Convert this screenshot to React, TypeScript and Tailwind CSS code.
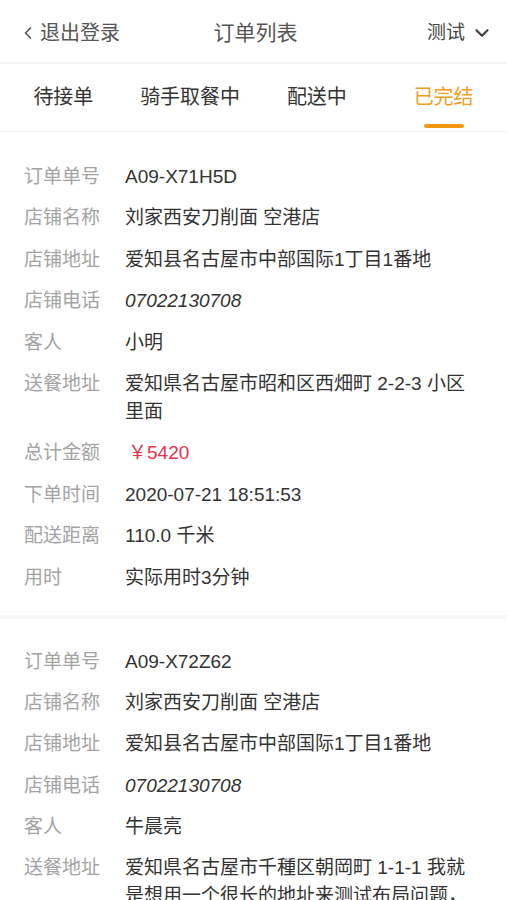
import { ChevronDown, ChevronLeft } from "lucide-react";

type Order = {
  id: string;
  shop: string;
  shopAddress: string;
  phone: string;
  customer: string;
  address: string;
  total: string;
  createdAt: string;
  distance: string;
  duration: string;
};

const orders: Order[] = [
  {
    id: "A09-X71H5D",
    shop: "刘家西安刀削面 空港店",
    shopAddress: "爱知县名古屋市中部国际1丁目1番地",
    phone: "07022130708",
    customer: "小明",
    address: "爱知県名古屋市昭和区西畑町 2-2-3 小区里面",
    total: "￥5420",
    createdAt: "2020-07-21 18:51:53",
    distance: "110.0 千米",
    duration: "实际用时3分钟",
  },
  {
    id: "A09-X72Z62",
    shop: "刘家西安刀削面 空港店",
    shopAddress: "爱知县名古屋市中部国际1丁目1番地",
    phone: "07022130708",
    customer: "牛晨亮",
    address: "爱知県名古屋市千種区朝岡町 1-1-1 我就是想用一个很长的地址来测试布局问题，如果地址太长的话会怎样",
    total: "￥3280",
    createdAt: "2020-07-21 17:20:08",
    distance: "8.6 千米",
    duration: "实际用时12分钟",
  },
];

const tabs = ["待接单", "骑手取餐中", "配送中", "已完结"];

function Row({ label, children }: { label: string; children: React.ReactNode }) {
  return (
    <div className="flex text-[19px] leading-[28px]">
      <div className="w-[101px] flex-none text-[#a3a3a3]">{label}</div>
      <div className="min-w-0 flex-1 text-[#333333]">{children}</div>
    </div>
  );
}

function OrderCard({ order, first }: { order: Order; first: boolean }) {
  return (
    <div className={`flex flex-col gap-[13.4px] pb-[23px] pl-6 pr-[23.5px] ${first ? "pt-[31px]" : "pt-[29px]"}`}>
      <Row label="订单单号">{order.id}</Row>
      <Row label="店铺名称">{order.shop}</Row>
      <Row label="店铺地址">{order.shopAddress}</Row>
      <Row label="店铺电话">
        <span className="italic">{order.phone}</span>
      </Row>
      <Row label="客人">{order.customer}</Row>
      <Row label="送餐地址">{order.address}</Row>
      <Row label="总计金额">
        <span className="pl-[3px] text-[#e8324f]">{order.total}</span>
      </Row>
      <Row label="下单时间">{order.createdAt}</Row>
      <Row label="配送距离">{order.distance}</Row>
      <Row label="用时">{order.duration}</Row>
    </div>
  );
}

export default function App() {
  const active = 3;
  return (
    <div
      className="min-h-screen bg-white"
      style={{ fontFamily: '"Liberation Sans", "Noto Sans CJK SC", sans-serif' }}
    >
      <header className="flex h-[64px] items-center justify-between border-b-2 border-[#f3f3f3] pl-[18px] pr-[14px] pt-[4px]">
        <button type="button" className="flex w-[140px] items-center gap-[2px] text-[20px] text-[#555555]">
          <ChevronLeft className="h-[20px] w-[20px]" strokeWidth={2} />
          退出登录
        </button>
        <h1 className="text-[21px] text-[#555555]">订单列表</h1>
        <button type="button" className="flex w-[140px] items-center justify-end gap-[6px] text-[19px] text-[#444444]">
          测试
          <ChevronDown className="h-[22px] w-[22px]" strokeWidth={2.5} />
        </button>
      </header>

      <nav className="flex h-[68px] border-b border-[#f2f2f2]">
        {tabs.map((tab, i) => (
          <div key={tab} className="relative flex flex-1 items-center justify-center pb-[2px] text-[20px]">
            <span className={i === active ? "text-[#f0a020]" : "text-[#333333]"}>{tab}</span>
            {i === active && (
              <span className="absolute bottom-[3px] left-1/2 h-[4px] w-[40px] -translate-x-1/2 rounded-full bg-[#ef9a12]" />
            )}
          </div>
        ))}
      </nav>

      {orders.map((order, i) => (
        <div key={order.id} className={i > 0 ? "border-t-[4px] border-[#f7f7f7]" : ""}>
          <OrderCard order={order} first={i === 0} />
        </div>
      ))}
    </div>
  );
}
